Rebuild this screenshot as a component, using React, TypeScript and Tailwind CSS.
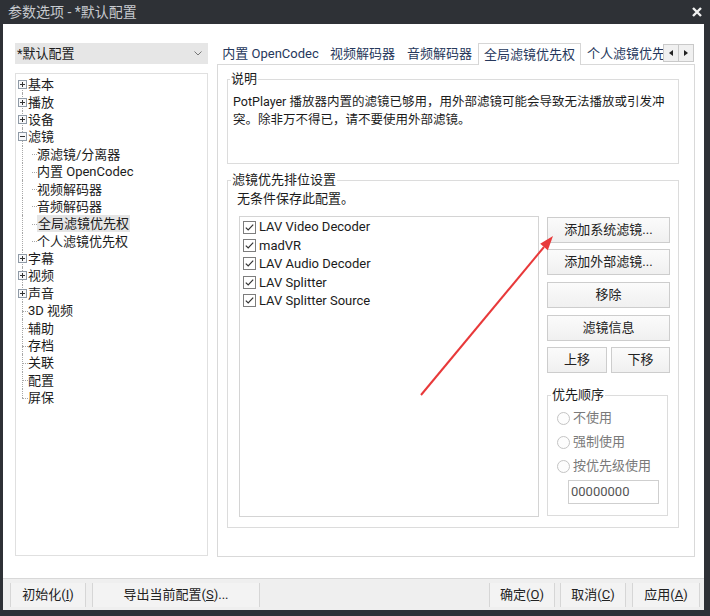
import React from 'react';

type Node = { label: string; kind: 'plus' | 'minus' | 'leaf' | 'child'; selected?: boolean };

const tree: Node[] = [
  { label: '基本', kind: 'plus' },
  { label: '播放', kind: 'plus' },
  { label: '设备', kind: 'plus' },
  { label: '滤镜', kind: 'minus' },
  { label: '源滤镜/分离器', kind: 'child' },
  { label: '内置 OpenCodec', kind: 'child' },
  { label: '视频解码器', kind: 'child' },
  { label: '音频解码器', kind: 'child' },
  { label: '全局滤镜优先权', kind: 'child', selected: true },
  { label: '个人滤镜优先权', kind: 'child' },
  { label: '字幕', kind: 'plus' },
  { label: '视频', kind: 'plus' },
  { label: '声音', kind: 'plus' },
  { label: '3D 视频', kind: 'leaf' },
  { label: '辅助', kind: 'leaf' },
  { label: '存档', kind: 'leaf' },
  { label: '关联', kind: 'leaf' },
  { label: '配置', kind: 'leaf' },
  { label: '屏保', kind: 'leaf' },
];

const filters = ['LAV Video Decoder', 'madVR', 'LAV Audio Decoder', 'LAV Splitter', 'LAV Splitter Source'];

const ExpandBox = ({ open }: { open: boolean }) => (
  <svg width="9" height="9" viewBox="0 0 9 9" className="relative z-10">
    <rect x="0.5" y="0.5" width="8" height="8" fill="#f7f8fa" stroke="#8f9aa6" />
    <line x1="2" y1="4.5" x2="7" y2="4.5" stroke="#333" />
    {!open && <line x1="4.5" y1="2" x2="4.5" y2="7" stroke="#333" />}
  </svg>
);

const TreeRow = ({ node, first, last }: { node: Node; first: boolean; last: boolean }) => (
  <div className="h-[17.4px] flex items-center">
    <div className="relative w-[12px] h-full flex items-center justify-center">
      <span
        className={`absolute left-[6px] border-l border-dotted border-[#a8a8a8] ${first ? 'top-1/2' : 'top-0'} ${last ? 'h-1/2' : 'bottom-0'}`}
      />
      {(node.kind === 'plus' || node.kind === 'minus') && <ExpandBox open={node.kind === 'minus'} />}
      {node.kind === 'leaf' && <span className="absolute left-[6px] top-1/2 w-[6px] border-t border-dotted border-[#a8a8a8]" />}
    </div>
    {node.kind === 'child' && (
      <div className="relative w-[9px] h-full">
        <span className="absolute left-[4px] top-1/2 w-[5px] border-t border-dotted border-[#a8a8a8]" />
      </div>
    )}
    <span className={`pr-[1px] leading-[17px] whitespace-nowrap ${node.selected ? 'bg-[#e5e5e5] pl-[1px]' : 'pl-0'}`}>{node.label}</span>
  </div>
);

const Btn = ({ children, className = '' }: { children: React.ReactNode; className?: string }) => (
  <div className={`h-[26px] flex items-center justify-center border border-[#cdcdcd] bg-gradient-to-b from-[#fbfbfb] to-[#f0f0f0] text-[#222] ${className}`}>
    {children}
  </div>
);

const CheckBox = () => (
  <svg width="13" height="13" viewBox="0 0 13 13">
    <rect x="0.5" y="0.5" width="12" height="12" fill="#fff" stroke="#7d7d7d" />
    <path d="M2.8 6.6 L5.2 9 L10.2 3.6" fill="none" stroke="#333" strokeWidth="1.2" />
  </svg>
);

const Radio = ({ label }: { label: string }) => (
  <div className="h-[24px] flex items-center gap-[3px] text-[#7a7a7a]">
    <span className="w-[13px] h-[13px] rounded-full border border-[#c4c4c4] bg-[#fdfdfd]" />
    <span>{label}</span>
  </div>
);

const BarBtn = ({ children, className = '' }: { children: React.ReactNode; className?: string }) => (
  <div className={`h-[24px] flex items-center justify-center border-x border-[#d6d6d6] bg-[#f3f3f3] text-[#222] ${className}`}>
    {children}
  </div>
);

export default function App() {
  return (
    <div
      className="relative w-[710px] h-[616px] bg-[#2e3136] flex flex-col text-[13px] text-[#1b1b1b]"
      style={{ fontFamily: 'Roboto, "Noto Sans CJK SC", sans-serif' }}
    >
      {/* title bar */}
      <div className="h-[24px] flex items-center justify-between pl-[8px] pr-[8px]">
        <span className="text-[14px] text-[#c6c9ce]">参数选项 - *默认配置</span>
        <svg width="10" height="10" viewBox="0 0 10 10">
          <path d="M1 1 L9 9 M9 1 L1 9" stroke="#f2f2f2" strokeWidth="2.4" />
        </svg>
      </div>

      <div className="flex-1 ml-[3px] mr-[6px] mb-[6px] bg-white flex flex-col">
        <div className="flex-1 flex pt-[19px] pl-[12px]">
          {/* left column */}
          <div className="w-[193px] flex flex-col">
            <div className="h-[21px] bg-[#e6e6e6] flex items-center justify-between pl-[2px] pr-[6px]">
              <span>*默认配置</span>
              <svg width="8" height="5" viewBox="0 0 8 5">
                <path d="M0.5 0.5 L4 4 L7.5 0.5" fill="none" stroke="#777" />
              </svg>
            </div>
            <div className="mt-[9px] h-[483px] border border-[#e0e0e0] pt-[2px]">
              {tree.map((n, i) => (
                <TreeRow key={n.label} node={n} first={i === 0} last={i === tree.length - 1} />
              ))}
            </div>
          </div>

          {/* right column */}
          <div className="ml-[9px] w-[478px] flex flex-col">
            <div className="h-[21px] flex items-end text-[#26385c]">
              <div className="w-[107px] h-[20px] flex items-center justify-center whitespace-nowrap">内置 OpenCodec</div>
              <div className="w-[77px] h-[20px] flex items-center justify-center">视频解码器</div>
              <div className="w-[77px] h-[20px] flex items-center justify-center">音频解码器</div>
              <div className="w-[103px] h-[22px] -mb-px relative z-10 bg-white border border-b-0 border-[#d6d6d6] flex items-center justify-center">
                全局滤镜优先权
              </div>
              <div className="w-[82px] h-[20px] flex items-center pl-[6px] overflow-hidden whitespace-nowrap">个人滤镜优先</div>
              <div className="w-[31px] h-[18px] self-start mt-[1px] flex border border-[#c9c9c9] bg-[#f0f0f0]">
                <div className="flex-1 flex items-center justify-center border-r border-[#c9c9c9]">
                  <svg width="4" height="6" viewBox="0 0 4 6"><path d="M4 0 L0 3 L4 6 Z" fill="#222" /></svg>
                </div>
                <div className="flex-1 flex items-center justify-center">
                  <svg width="4" height="6" viewBox="0 0 4 6"><path d="M0 0 L4 3 L0 6 Z" fill="#222" /></svg>
                </div>
              </div>
            </div>

            <div className="h-[493px] border border-[#d9d9d9] pt-[14px] pl-[9px]">
              {/* 说明 */}
              <div className="relative w-[452px] h-[85px] border border-[#dcdcdc] pt-[13px] pl-[5px] leading-[18px] whitespace-nowrap">
                <span className="absolute -top-[10px] left-[2px] bg-white px-[1px] leading-[18px] text-[13px]">说明</span>
                <div className="text-[12.5px]">
                  PotPlayer 播放器内置的滤镜已够用，用外部滤镜可能会导致无法播放或引发冲
                  <br />
                  突。除非万不得已，请不要使用外部滤镜。
                </div>
              </div>

              {/* 滤镜优先排位设置 */}
              <div className="relative mt-[16px] w-[452px] h-[348px] border border-[#dcdcdc] pt-[9px] pl-[9px]">
                <span className="absolute -top-[10px] left-[3px] bg-white px-[1px] leading-[18px]">滤镜优先排位设置</span>
                <div className="leading-[18px]">无条件保存此配置。</div>
                <div className="mt-[8px] pl-[2px] flex">
                  <div className="w-[300px] h-[301px] border border-[#d4d4d4] pt-[1px] pl-[3px]">
                    {filters.map(f => (
                      <div key={f} className="h-[18.4px] flex items-center gap-[3px] whitespace-nowrap">
                        <CheckBox />
                        <span>{f}</span>
                      </div>
                    ))}
                  </div>
                  <div className="ml-[8px] w-[123px] flex flex-col">
                    <Btn className="mt-px">添加系统滤镜...</Btn>
                    <Btn className="mt-[6px]">添加外部滤镜...</Btn>
                    <Btn className="mt-[7px]">移除</Btn>
                    <Btn className="mt-[7px]">滤镜信息</Btn>
                    <div className="mt-[6px] flex justify-between">
                      <Btn className="w-[60px]">上移</Btn>
                      <Btn className="w-[59px]">下移</Btn>
                    </div>
                    <div className="relative mt-[22px] w-[121px] h-[121px] border border-[#dcdcdc] pt-[10px] pl-[9px]">
                      <span className="absolute -top-[10px] left-[3px] bg-white px-[1px] leading-[18px]">优先顺序</span>
                      <Radio label="不使用" />
                      <Radio label="强制使用" />
                      <Radio label="按优先级使用" />
                      <div className="mt-[2px] ml-[11px] w-[91px] h-[24px] border border-[#cfcfcf] flex items-center pl-[2px] text-[#555]">
                        00000000
                      </div>
                    </div>
                  </div>
                </div>
              </div>
            </div>
          </div>
        </div>

        {/* bottom bar */}
        <div className="h-[32px] bg-[#efefef] border-t border-[#d8d8d8] flex items-center pl-[7px] pr-[4px]">
          <BarBtn className="w-[76px]">
            初始化(<span className="underline">I</span>)
          </BarBtn>
          <BarBtn className="ml-[6px] w-[168px]">
            导出当前配置(<span className="underline">S</span>)...
          </BarBtn>
          <div className="flex-1" />
          <BarBtn className="w-[66px]">
            确定(<span className="underline">O</span>)
          </BarBtn>
          <BarBtn className="ml-[5px] w-[66px]">
            取消(<span className="underline">C</span>)
          </BarBtn>
          <BarBtn className="ml-[6px] w-[68px]">
            应用(<span className="underline">A</span>)
          </BarBtn>
        </div>
      </div>

      {/* red annotation arrow */}
      <svg className="absolute inset-0 pointer-events-none" width="710" height="616" viewBox="0 0 710 616">
        <line x1="421" y1="395" x2="544" y2="247" stroke="#e8393a" strokeWidth="2" />
        <polygon points="553,236 547.8,250.2 540.2,243.8" fill="#e8393a" />
      </svg>
    </div>
  );
}
